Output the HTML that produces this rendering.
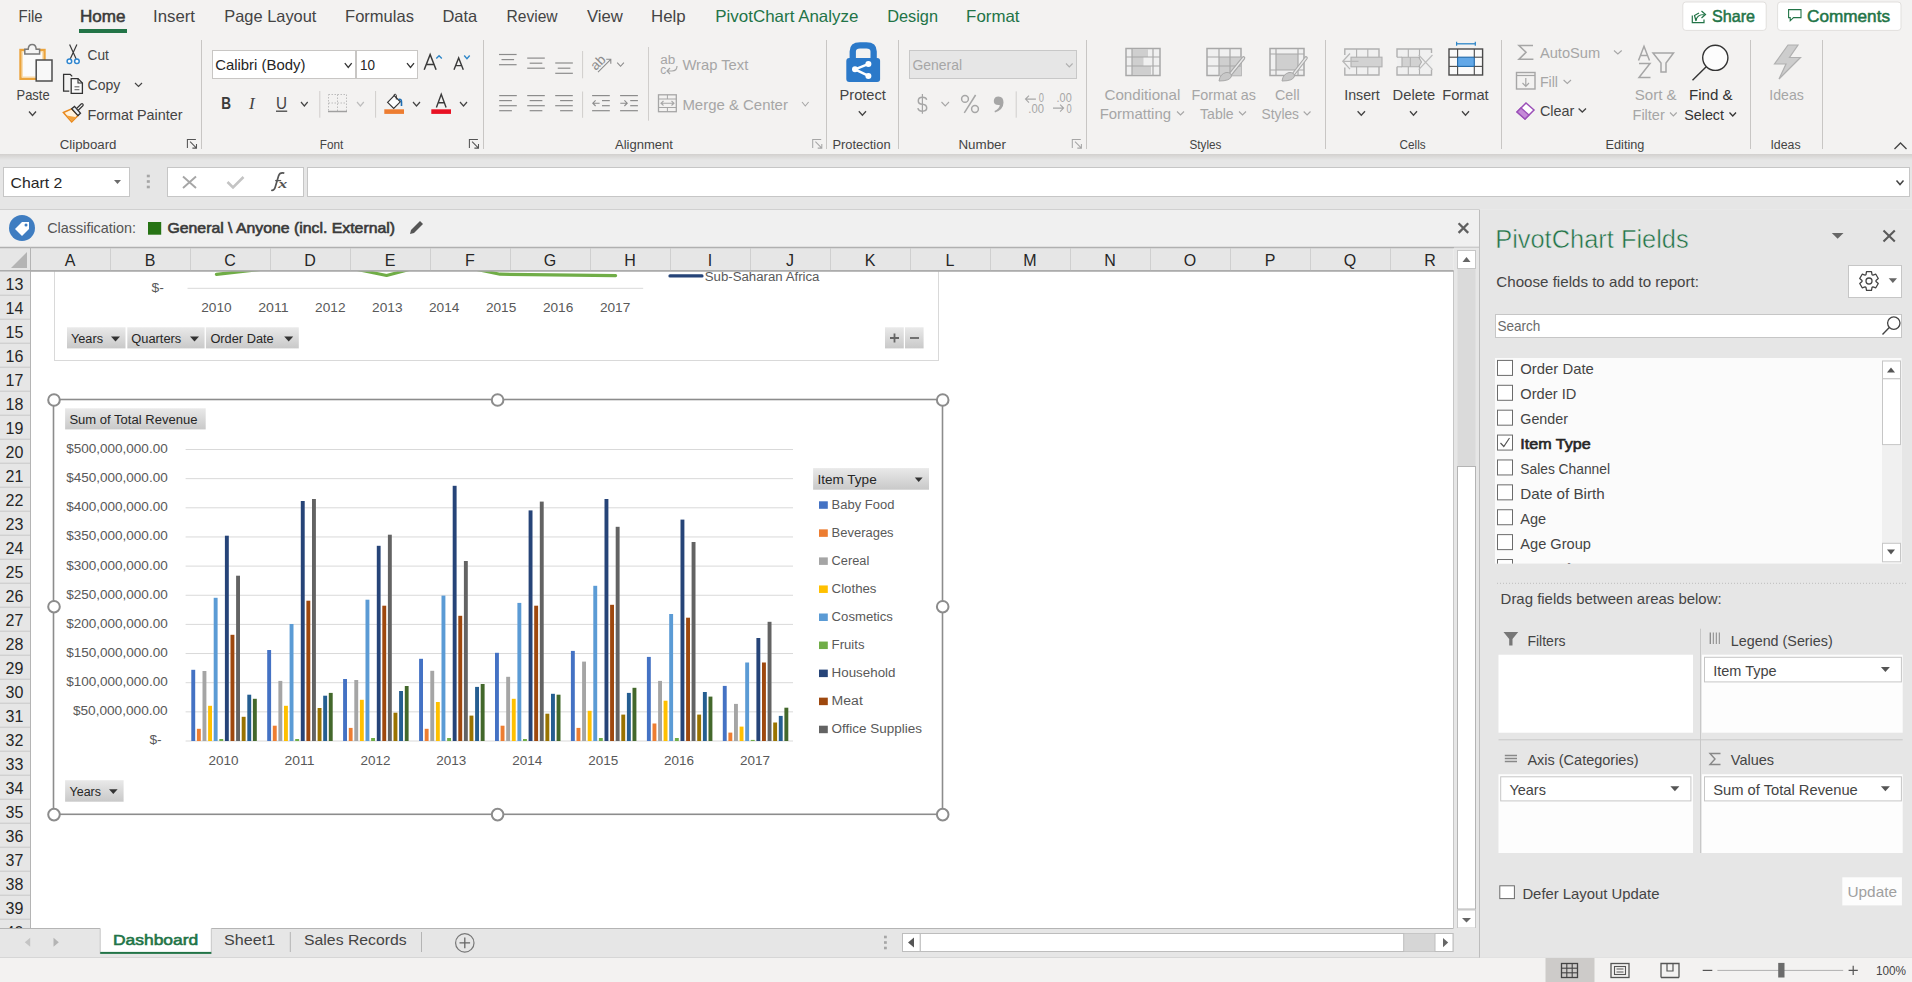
<!DOCTYPE html>
<html><head><meta charset="utf-8"><title>Excel - PivotChart</title>
<style>
html,body{margin:0;padding:0;background:#f3f2f1;}
body{width:1912px;height:982px;overflow:hidden;position:relative;font-family:"Liberation Sans",sans-serif;}
svg{position:absolute;left:0;top:0;display:block;font-family:"Liberation Sans",sans-serif;}
</style></head><body>
<svg width="1912" height="982" viewBox="0 0 1912 982">
<rect x="0" y="0" width="1912.00" height="154.00" fill="#f3f2f1"/>
<defs><linearGradient id="rshadow" x1="0" y1="0" x2="0" y2="1"><stop offset="0" stop-color="#d2d0ce"/><stop offset="1" stop-color="#e6e6e6"/></linearGradient><linearGradient id="btn" x1="0" y1="0" x2="0" y2="1"><stop offset="0" stop-color="#e9e9e9"/><stop offset="1" stop-color="#c9c9c9"/></linearGradient></defs>
<rect x="0" y="154" width="1912.00" height="6.00" fill="url(#rshadow)"/>
<text x="18.6" y="22.0" font-size="16.5" fill="#444" textLength="24.1" lengthAdjust="spacingAndGlyphs">File</text>
<text x="80.0" y="22.0" font-size="16.5" fill="#3a3a3a" textLength="45.5" lengthAdjust="spacingAndGlyphs" stroke="#3a3a3a" stroke-width="0.55">Home</text>
<text x="153.0" y="22.0" font-size="16.5" fill="#444" textLength="42.0" lengthAdjust="spacingAndGlyphs">Insert</text>
<text x="224.3" y="22.0" font-size="16.5" fill="#444" textLength="92.1" lengthAdjust="spacingAndGlyphs">Page Layout</text>
<text x="345.1" y="22.0" font-size="16.5" fill="#444" textLength="68.8" lengthAdjust="spacingAndGlyphs">Formulas</text>
<text x="442.4" y="22.0" font-size="16.5" fill="#444" textLength="34.8" lengthAdjust="spacingAndGlyphs">Data</text>
<text x="506.5" y="22.0" font-size="16.5" fill="#444" textLength="51.1" lengthAdjust="spacingAndGlyphs">Review</text>
<text x="587.0" y="22.0" font-size="16.5" fill="#444" textLength="35.9" lengthAdjust="spacingAndGlyphs">View</text>
<text x="651.0" y="22.0" font-size="16.5" fill="#444" textLength="34.6" lengthAdjust="spacingAndGlyphs">Help</text>
<text x="715.3" y="22.0" font-size="16.5" fill="#227447" textLength="143.1" lengthAdjust="spacingAndGlyphs">PivotChart Analyze</text>
<text x="887.2" y="22.0" font-size="16.5" fill="#227447" textLength="50.8" lengthAdjust="spacingAndGlyphs">Design</text>
<text x="966.1" y="22.0" font-size="16.5" fill="#227447" textLength="53.4" lengthAdjust="spacingAndGlyphs">Format</text>
<rect x="79" y="29" width="48.00" height="4.00" fill="#227447"/>
<rect x="1682.8" y="2" width="83.40" height="28.40" fill="#ffffff" stroke="#e1dfdd" stroke-width="1" rx="3"/>
<rect x="1777.6" y="2" width="123.40" height="28.40" fill="#ffffff" stroke="#e1dfdd" stroke-width="1" rx="3"/>
<path d="M1692.3 15.5 L1692.3 22.7 L1704 22.7 L1704 19.5" fill="none" stroke="#227447" stroke-width="1.2"/>
<path d="M1696 21 Q1696.5 14.5 1704.5 14.5 M1701.5 11 L1705.5 14.5 L1701.5 18 M1696 21 L1694.5 15.5 L1699 13" fill="none" stroke="#227447" stroke-width="1.2"/>
<text x="1712.0" y="21.6" font-size="16.5" fill="#227447" textLength="43.0" lengthAdjust="spacingAndGlyphs" stroke="#227447" stroke-width="0.5">Share</text>
<path d="M1788.6 9.6 L1801 9.6 L1801 17.6 L1793.5 17.6 L1790.2 20.8 L1790.2 17.6 L1788.6 17.6 Z" fill="none" stroke="#227447" stroke-width="1.1"/>
<text x="1807.0" y="21.6" font-size="16.5" fill="#227447" textLength="83.0" lengthAdjust="spacingAndGlyphs" stroke="#227447" stroke-width="0.5">Comments</text>
<line x1="201.5" y1="40" x2="201.5" y2="149" stroke="#c8c6c4" stroke-width="1"/>
<line x1="483.5" y1="40" x2="483.5" y2="149" stroke="#c8c6c4" stroke-width="1"/>
<line x1="826.5" y1="40" x2="826.5" y2="149" stroke="#c8c6c4" stroke-width="1"/>
<line x1="898.5" y1="40" x2="898.5" y2="149" stroke="#c8c6c4" stroke-width="1"/>
<line x1="1086.5" y1="40" x2="1086.5" y2="149" stroke="#c8c6c4" stroke-width="1"/>
<line x1="1325.5" y1="40" x2="1325.5" y2="149" stroke="#c8c6c4" stroke-width="1"/>
<line x1="1501.5" y1="40" x2="1501.5" y2="149" stroke="#c8c6c4" stroke-width="1"/>
<line x1="1750.5" y1="40" x2="1750.5" y2="149" stroke="#c8c6c4" stroke-width="1"/>
<line x1="1822.5" y1="40" x2="1822.5" y2="149" stroke="#c8c6c4" stroke-width="1"/>
<text x="59.8" y="148.5" font-size="12.5" fill="#444" textLength="56.7" lengthAdjust="spacingAndGlyphs">Clipboard</text>
<text x="319.8" y="148.5" font-size="12.5" fill="#444" textLength="23.5" lengthAdjust="spacingAndGlyphs">Font</text>
<text x="615.0" y="148.5" font-size="12.5" fill="#444" textLength="58.0" lengthAdjust="spacingAndGlyphs">Alignment</text>
<text x="832.4" y="148.5" font-size="12.5" fill="#444" textLength="58.2" lengthAdjust="spacingAndGlyphs">Protection</text>
<text x="958.4" y="148.5" font-size="12.5" fill="#444" textLength="47.6" lengthAdjust="spacingAndGlyphs">Number</text>
<text x="1189.5" y="148.5" font-size="12.5" fill="#444" textLength="31.9" lengthAdjust="spacingAndGlyphs">Styles</text>
<text x="1399.6" y="148.5" font-size="12.5" fill="#444" textLength="26.1" lengthAdjust="spacingAndGlyphs">Cells</text>
<text x="1605.6" y="148.5" font-size="12.5" fill="#444" textLength="38.8" lengthAdjust="spacingAndGlyphs">Editing</text>
<text x="1770.4" y="148.5" font-size="12.5" fill="#444" textLength="30.2" lengthAdjust="spacingAndGlyphs">Ideas</text>
<path d="M187.4 147.9 L187.4 139.4 L195.9 139.4 M190.1 141.7 L196.5 148.1 M196.5 144 L196.5 148.1 L192.4 148.1" fill="none" stroke="#555" stroke-width="1.05"/>
<path d="M469.4 147.9 L469.4 139.4 L477.9 139.4 M472.1 141.7 L478.5 148.1 M478.5 144 L478.5 148.1 L474.4 148.1" fill="none" stroke="#555" stroke-width="1.05"/>
<path d="M812.6999999999999 147.9 L812.6999999999999 139.4 L821.1999999999999 139.4 M815.4 141.7 L821.8 148.1 M821.8 144 L821.8 148.1 L817.6999999999999 148.1" fill="none" stroke="#a6a6a6" stroke-width="1.05"/>
<path d="M1072.3000000000002 147.9 L1072.3000000000002 139.4 L1080.8000000000002 139.4 M1075.0 141.7 L1081.4 148.1 M1081.4 144 L1081.4 148.1 L1077.3000000000002 148.1" fill="none" stroke="#a6a6a6" stroke-width="1.05"/>
<rect x="20.5" y="50" width="24.00" height="28.80" fill="#fbfbfb" stroke="#eba43c" stroke-width="2.4"/>
<rect x="22.3" y="51.8" width="20.40" height="25.20" fill="none" stroke="#f8d9a4" stroke-width="1"/>
<path d="M24.8 54 L24.8 49.2 L28.2 49.2 Q28.5 44.6 32.2 44.6 Q35.9 44.6 36.2 49.2 L39.6 49.2 L39.6 54 Z" fill="#f5f5f5" stroke="#7a7a7a" stroke-width="1.5"/>
<rect x="36.2" y="60" width="15.80" height="21.00" fill="#f8f8f8" stroke="#4d4d4d" stroke-width="1.5"/>
<text x="16.5" y="100.0" font-size="14.5" fill="#444" textLength="33.1" lengthAdjust="spacingAndGlyphs">Paste</text>
<path d="M29 111.5 L32.5 115.5 L36 111.5" fill="none" stroke="#444" stroke-width="1.3"/>
<path d="M69.6 44.4 L76.2 59 M76.9 44.4 L70.2 59" fill="none" stroke="#3a3a3a" stroke-width="1.2"/>
<circle cx="69.4" cy="61.3" r="2.3" fill="#ffffff" stroke="#2f86d0" stroke-width="1.5"/>
<circle cx="76.9" cy="61.3" r="2.3" fill="#ffffff" stroke="#2f86d0" stroke-width="1.5"/>
<text x="87.5" y="59.8" font-size="14.5" fill="#444" textLength="21.3" lengthAdjust="spacingAndGlyphs">Cut</text>
<path d="M69.3 91.1 L63.6 91.1 L63.6 74.4 L70.2 74.4 L72.2 76.4" fill="none" stroke="#333" stroke-width="1.3"/>
<path d="M71.2 78.6 L78 78.6 L82.4 83 L82.4 93.3 L71.2 93.3 Z" fill="#fafafa" stroke="#333" stroke-width="1.3"/>
<path d="M78 78.6 L78 83 L82.4 83" fill="none" stroke="#333" stroke-width="1.1"/>
<line x1="74.5" y1="86.8" x2="79.4" y2="86.8" stroke="#666" stroke-width="1.1"/>
<line x1="74.5" y1="89.7" x2="79.4" y2="89.7" stroke="#666" stroke-width="1.1"/>
<text x="87.5" y="89.7" font-size="14.5" fill="#444" textLength="32.8" lengthAdjust="spacingAndGlyphs">Copy</text>
<path d="M135 83 L138.5 86.5 L142 83" fill="none" stroke="#444" stroke-width="1.2"/>
<path d="M63.4 112.5 L71.7 108.8 L78 115.6 L71.7 121.9 Z" fill="#fff3df" stroke="#e8891e" stroke-width="1.5"/>
<path d="M66.6 115.6 L76.6 117.2 L71.7 121.3 Z" fill="#f2a23c"/>
<line x1="77.2" y1="109.6" x2="82" y2="104.9" stroke="#333" stroke-width="3.6" stroke-linecap="round"/>
<line x1="77.2" y1="109.6" x2="82" y2="104.9" stroke="#f5f5f5" stroke-width="1.3" stroke-linecap="round"/>
<path d="M71.7 108.8 L74.5 106.4 L80.5 113.3 L78 115.6 Z" fill="#e8eef5" stroke="#333" stroke-width="1.3"/>
<text x="87.5" y="119.6" font-size="14.5" fill="#444" textLength="95.1" lengthAdjust="spacingAndGlyphs">Format Painter</text>
<rect x="212.5" y="50.5" width="143.00" height="28.00" fill="#ffffff" stroke="#c8c6c4" stroke-width="1"/>
<rect x="356.5" y="50.5" width="61.00" height="28.00" fill="#ffffff" stroke="#c8c6c4" stroke-width="1"/>
<text x="215.2" y="70.2" font-size="14.5" fill="#262626" textLength="90.2" lengthAdjust="spacingAndGlyphs">Calibri (Body)</text>
<path d="M344.8 63.2 L348.25 67.4 L351.7 63.2" fill="none" stroke="#333" stroke-width="1.3"/>
<text x="360.0" y="70.2" font-size="14.5" fill="#262626" textLength="15.0" lengthAdjust="spacingAndGlyphs">10</text>
<path d="M407 63.2 L410.5 67.4 L414 63.2" fill="none" stroke="#333" stroke-width="1.3"/>
<path d="M424.2 69.8 L430.15 54.6 L436.1 69.8 M426.3 64.5 L434 64.5" fill="none" stroke="#3a3a3a" stroke-width="1.5"/>
<path d="M436.3 58.6 L439.05 55.7 L441.8 58.6" fill="none" stroke="#2e86c8" stroke-width="1.4"/>
<path d="M454 69.8 L458.65 58 L463.3 69.8 M455.7 65.6 L461.6 65.6" fill="none" stroke="#3a3a3a" stroke-width="1.4"/>
<path d="M464.2 55.5 L466.95 58.6 L469.7 55.5" fill="none" stroke="#2e86c8" stroke-width="1.4"/>
<text x="221.2" y="108.6" font-size="16.5" fill="#3a3a3a" font-weight="bold" textLength="9.8" lengthAdjust="spacingAndGlyphs">B</text>
<text x="249" y="108.6" font-size="17" fill="#444" font-family="Liberation Serif" font-style="italic">I</text>
<text x="276.0" y="108.6" font-size="16" fill="#444" textLength="11.0" lengthAdjust="spacingAndGlyphs">U</text>
<line x1="276" y1="111.2" x2="287.2" y2="111.2" stroke="#444" stroke-width="1.3"/>
<path d="M301 102 L304.35 106 L307.7 102" fill="none" stroke="#444" stroke-width="1.2"/>
<line x1="319.8" y1="91" x2="319.8" y2="117.7" stroke="#d0cecc" stroke-width="1"/>
<rect x="328.5" y="94.5" width="18.00" height="17.00" fill="none" stroke="#bdbdbd" stroke-width="1" stroke-dasharray="1.5 1.5"/>
<line x1="337.5" y1="94.5" x2="337.5" y2="111.5" stroke="#bdbdbd" stroke-width="1" stroke-dasharray="1.5 1.5"/>
<line x1="328.5" y1="103" x2="346.5" y2="103" stroke="#bdbdbd" stroke-width="1" stroke-dasharray="1.5 1.5"/>
<line x1="328" y1="111.5" x2="347" y2="111.5" stroke="#a0a0a0" stroke-width="1.5"/>
<path d="M357 102 L360.4 106 L363.8 102" fill="none" stroke="#bdbdbd" stroke-width="1.2"/>
<line x1="375.6" y1="91" x2="375.6" y2="117.7" stroke="#d0cecc" stroke-width="1"/>
<path d="M387.6 102.3 L394.2 95.7 L400.3 101.8 L393.7 108.4 Z" fill="#fdfdfd" stroke="#333" stroke-width="1.2"/>
<path d="M394.2 96 L394.2 94.5 Q395.6 93.4 396.3 95.2 L396.3 99.5" fill="none" stroke="#333" stroke-width="1"/>
<path d="M398.6 99.5 Q401.5 98.5 401.5 102 L401.5 106" fill="none" stroke="#1f6fb5" stroke-width="1.6"/>
<rect x="384.3" y="109.3" width="19.70" height="4.60" fill="#ed7d31"/>
<path d="M413 102 L416.5 106 L420 102" fill="none" stroke="#444" stroke-width="1.2"/>
<path d="M436.4 107.6 L441.25 94.3 L446.1 107.6 M438.2 102.8 L444.3 102.8" fill="none" stroke="#3a3a3a" stroke-width="1.4"/>
<rect x="431.3" y="109.3" width="19.70" height="4.60" fill="#e81123"/>
<path d="M460 102 L463.5 106 L467 102" fill="none" stroke="#444" stroke-width="1.2"/>
<line x1="498.99999999999994" y1="54.5" x2="516.5999999999999" y2="54.5" stroke="#8c8c8c" stroke-width="1.2"/>
<line x1="501.49999999999994" y1="59.6" x2="514.0999999999999" y2="59.6" stroke="#8c8c8c" stroke-width="1.2"/>
<line x1="498.99999999999994" y1="64.7" x2="516.5999999999999" y2="64.7" stroke="#8c8c8c" stroke-width="1.2"/>
<line x1="527.2" y1="58.1" x2="544.8" y2="58.1" stroke="#8c8c8c" stroke-width="1.2"/>
<line x1="529.7" y1="63.2" x2="542.3" y2="63.2" stroke="#8c8c8c" stroke-width="1.2"/>
<line x1="527.2" y1="68.2" x2="544.8" y2="68.2" stroke="#8c8c8c" stroke-width="1.2"/>
<line x1="555.25" y1="63" x2="572.8499999999999" y2="63" stroke="#8c8c8c" stroke-width="1.2"/>
<line x1="557.75" y1="68.2" x2="570.3499999999999" y2="68.2" stroke="#8c8c8c" stroke-width="1.2"/>
<line x1="555.25" y1="73.3" x2="572.8499999999999" y2="73.3" stroke="#8c8c8c" stroke-width="1.2"/>
<line x1="582.6" y1="51" x2="582.6" y2="78.3" stroke="#d0cecc" stroke-width="1"/>
<text x="589.5" y="67" font-size="13.5" fill="#8c8c8c" transform="rotate(-45 597.5 61.3)" style="-webkit-font-smoothing:antialiased">ab</text>
<path d="M598 72.2 L610.8 59.4 M606.2 59.2 L610.8 59.2 L610.8 63.8" fill="none" stroke="#8c8c8c" stroke-width="1.1"/>
<path d="M617.2 62.6 L620.55 66.3 L623.9 62.6" fill="none" stroke="#8c8c8c" stroke-width="1.1"/>
<line x1="648.5" y1="47" x2="648.5" y2="120.7" stroke="#d0cecc" stroke-width="1"/>
<text x="660.3" y="63.8" font-size="12" fill="#a6a6a6" textLength="15" lengthAdjust="spacingAndGlyphs">ab</text>
<text x="660.3" y="73.6" font-size="12" fill="#a6a6a6">c</text>
<path d="M677 66 Q677 71 672 71 L667 71 M670 68 L667 71 L670 74" fill="none" stroke="#a6a6a6" stroke-width="1.2"/>
<text x="682.4" y="69.8" font-size="14.5" fill="#a6a6a6" textLength="65.9" lengthAdjust="spacingAndGlyphs">Wrap Text</text>
<line x1="499.2" y1="95.6" x2="516.8" y2="95.6" stroke="#8c8c8c" stroke-width="1.2"/>
<line x1="499.2" y1="100.6" x2="511.9" y2="100.6" stroke="#8c8c8c" stroke-width="1.2"/>
<line x1="499.2" y1="105.7" x2="516.8" y2="105.7" stroke="#8c8c8c" stroke-width="1.2"/>
<line x1="499.2" y1="110.7" x2="511.9" y2="110.7" stroke="#8c8c8c" stroke-width="1.2"/>
<line x1="527.2" y1="95.6" x2="544.8" y2="95.6" stroke="#8c8c8c" stroke-width="1.2"/>
<line x1="529.65" y1="100.6" x2="542.35" y2="100.6" stroke="#8c8c8c" stroke-width="1.2"/>
<line x1="527.2" y1="105.7" x2="544.8" y2="105.7" stroke="#8c8c8c" stroke-width="1.2"/>
<line x1="529.65" y1="110.7" x2="542.35" y2="110.7" stroke="#8c8c8c" stroke-width="1.2"/>
<line x1="555.1999999999999" y1="95.6" x2="572.8" y2="95.6" stroke="#8c8c8c" stroke-width="1.2"/>
<line x1="560.0999999999999" y1="100.6" x2="572.8" y2="100.6" stroke="#8c8c8c" stroke-width="1.2"/>
<line x1="555.1999999999999" y1="105.7" x2="572.8" y2="105.7" stroke="#8c8c8c" stroke-width="1.2"/>
<line x1="560.0999999999999" y1="110.7" x2="572.8" y2="110.7" stroke="#8c8c8c" stroke-width="1.2"/>
<line x1="582.6" y1="91.5" x2="582.6" y2="117.8" stroke="#d0cecc" stroke-width="1"/>
<line x1="592.0999999999999" y1="95.6" x2="609.8" y2="95.6" stroke="#8c8c8c" stroke-width="1.2"/>
<line x1="602.0" y1="100.6" x2="609.8" y2="100.6" stroke="#8c8c8c" stroke-width="1.2"/>
<line x1="602.0" y1="105.7" x2="609.8" y2="105.7" stroke="#8c8c8c" stroke-width="1.2"/>
<line x1="592.0999999999999" y1="110.7" x2="609.8" y2="110.7" stroke="#8c8c8c" stroke-width="1.2"/>
<path d="M599.6 103.2 L592.8 103.2 M595.6 100.4 L592.8 103.2 L595.6 106" fill="none" stroke="#8c8c8c" stroke-width="1.1"/>
<line x1="620.1" y1="95.6" x2="637.9" y2="95.6" stroke="#8c8c8c" stroke-width="1.2"/>
<line x1="630.1999999999999" y1="100.6" x2="637.9" y2="100.6" stroke="#8c8c8c" stroke-width="1.2"/>
<line x1="630.1999999999999" y1="105.7" x2="637.9" y2="105.7" stroke="#8c8c8c" stroke-width="1.2"/>
<line x1="620.1" y1="110.7" x2="637.9" y2="110.7" stroke="#8c8c8c" stroke-width="1.2"/>
<path d="M620.3 103.2 L627.2 103.2 M624.4 100.4 L627.2 103.2 L624.4 106" fill="none" stroke="#8c8c8c" stroke-width="1.1"/>
<rect x="658.5" y="94.8" width="17.80" height="16.90" fill="none" stroke="#a6a6a6" stroke-width="1.3"/>
<line x1="658.5" y1="99" x2="676.3" y2="99" stroke="#a6a6a6" stroke-width="1"/>
<line x1="658.5" y1="107.5" x2="676.3" y2="107.5" stroke="#a6a6a6" stroke-width="1"/>
<line x1="667.4" y1="94.8" x2="667.4" y2="99" stroke="#a6a6a6" stroke-width="1"/>
<line x1="667.4" y1="107.5" x2="667.4" y2="111.7" stroke="#a6a6a6" stroke-width="1"/>
<path d="M661 103.2 L674 103.2 M663.5 101 L661 103.2 L663.5 105.5 M671.5 101 L674 103.2 L671.5 105.5" fill="none" stroke="#a6a6a6" stroke-width="1.1"/>
<text x="682.4" y="110.0" font-size="14.5" fill="#a6a6a6" textLength="105.5" lengthAdjust="spacingAndGlyphs">Merge &amp; Center</text>
<path d="M802 102 L805.3 106 L808.6 102" fill="none" stroke="#a6a6a6" stroke-width="1.1"/>
<path d="M852.75 59 L852.75 51.5 Q852.75 45.35 860 45.35 L866.4 45.35 Q873.65 45.35 873.65 51.5 L873.65 59" fill="none" stroke="#2b79c9" stroke-width="6.3"/>
<rect x="846.3" y="58" width="33.80" height="23.90" fill="#2b79c9" rx="3"/>
<path d="M855 69.3 L868 64.2 M855 69.3 L868 75.6" fill="none" stroke="#fff" stroke-width="2.4"/>
<circle cx="855" cy="69.3" r="3" fill="#fff"/><circle cx="868.4" cy="64" r="3" fill="#fff"/><circle cx="868.4" cy="75.9" r="3" fill="#fff"/>
<text x="839.5" y="99.8" font-size="14.5" fill="#444" textLength="46.4" lengthAdjust="spacingAndGlyphs">Protect</text>
<path d="M858.8 111.3 L862.4 115.3 L866 111.3" fill="none" stroke="#444" stroke-width="1.3"/>
<rect x="909.5" y="50.5" width="167.00" height="28.00" fill="#e6e6e6" stroke="#c8c8c8" stroke-width="1"/>
<text x="912.5" y="70.0" font-size="14.5" fill="#a6a6a6" textLength="49.5" lengthAdjust="spacingAndGlyphs">General</text>
<path d="M1066 63.5 L1069.3 67 L1072.6 63.5" fill="none" stroke="#b0b0b0" stroke-width="1.1"/>
<line x1="922.4" y1="94" x2="922.4" y2="113.7" stroke="#a6a6a6" stroke-width="1.2"/>
<path d="M926.6 99.8 Q926.2 97.3 922.4 97.3 Q918.3 97.3 918.3 100.9 Q918.3 103.9 922.4 104.3 Q926.7 104.7 926.7 108.1 Q926.7 111.2 922.4 111.2 Q918.4 111.2 917.9 108.2" fill="none" stroke="#a6a6a6" stroke-width="1.5"/>
<path d="M941.5 102 L945.25 106 L949 102" fill="none" stroke="#a6a6a6" stroke-width="1.1"/>
<circle cx="965" cy="98.9" r="3.4" fill="none" stroke="#a6a6a6" stroke-width="1.5"/>
<circle cx="975" cy="109" r="3.4" fill="none" stroke="#a6a6a6" stroke-width="1.5"/>
<line x1="975.6" y1="95" x2="964.3" y2="112.8" stroke="#a6a6a6" stroke-width="1.5"/>
<path d="M998.5 96.5 Q1003.5 96.5 1003.5 102.5 Q1003.5 109.5 995 112.5 L994.5 111 Q999.5 108.5 999.8 105 Q993.5 105.5 993.8 100.8 Q994.2 96.5 998.5 96.5 Z" fill="#a6a6a6"/>
<line x1="1016.2" y1="91.4" x2="1016.2" y2="117.7" stroke="#d0cecc" stroke-width="1"/>
<text x="1038.7" y="102.4" font-size="12" fill="#a6a6a6" textLength="5.2" lengthAdjust="spacingAndGlyphs">0</text>
<text x="1028.3" y="112.8" font-size="12" fill="#a6a6a6" textLength="15.6" lengthAdjust="spacingAndGlyphs">.00</text>
<path d="M1035.9 99.1 L1025.5 99.1 M1029 95.6 L1025.5 99.1 L1029 102.6" fill="none" stroke="#a6a6a6" stroke-width="1.1"/>
<text x="1056.6" y="102.4" font-size="12" fill="#a6a6a6" textLength="15.1" lengthAdjust="spacingAndGlyphs">.00</text>
<text x="1066.5" y="112.8" font-size="12" fill="#a6a6a6" textLength="5.2" lengthAdjust="spacingAndGlyphs">0</text>
<path d="M1053 108.1 L1063.6 108.1 M1060.1 104.6 L1063.6 108.1 L1060.1 111.6" fill="none" stroke="#a6a6a6" stroke-width="1.1"/>
<rect x="1126" y="48.5" width="34.00" height="27.00" fill="#f0f0f0" stroke="#a8a8a8" stroke-width="1.5"/>
<rect x="1132" y="49" width="16.00" height="8.00" fill="#cfcfcf"/>
<rect x="1132" y="57" width="11.50" height="9.00" fill="#cfcfcf"/>
<rect x="1132" y="66" width="19.00" height="9.00" fill="#cfcfcf"/>
<line x1="1126" y1="57" x2="1160" y2="57" stroke="#a8a8a8" stroke-width="1.2"/>
<line x1="1126" y1="66" x2="1160" y2="66" stroke="#a8a8a8" stroke-width="1.2"/>
<line x1="1132" y1="48.5" x2="1132" y2="75.5" stroke="#a8a8a8" stroke-width="1.2"/>
<line x1="1153" y1="48.5" x2="1153" y2="75.5" stroke="#a8a8a8" stroke-width="1.2"/>
<text x="1104.5" y="99.6" font-size="14.5" fill="#a6a6a6" textLength="75.8" lengthAdjust="spacingAndGlyphs">Conditional</text>
<text x="1099.7" y="119.3" font-size="14.5" fill="#a6a6a6" textLength="71.3" lengthAdjust="spacingAndGlyphs">Formatting</text>
<path d="M1177 111.5 L1180.5 115 L1184 111.5" fill="none" stroke="#a6a6a6" stroke-width="1.1"/>
<rect x="1207" y="48.5" width="34.00" height="27.00" fill="#f0f0f0" stroke="#a8a8a8" stroke-width="1.5"/>
<rect x="1219" y="57" width="22.00" height="18.50" fill="#cfcfcf"/>
<line x1="1207" y1="57" x2="1241" y2="57" stroke="#a8a8a8" stroke-width="1.2"/>
<line x1="1207" y1="66" x2="1241" y2="66" stroke="#a8a8a8" stroke-width="1.2"/>
<line x1="1219" y1="48.5" x2="1219" y2="75.5" stroke="#a8a8a8" stroke-width="1.2"/>
<line x1="1230" y1="48.5" x2="1230" y2="75.5" stroke="#a8a8a8" stroke-width="1.2"/>
<line x1="1231" y1="73.5" x2="1243.5" y2="58" stroke="#a8a8a8" stroke-width="3.6" stroke-linecap="round"/>
<line x1="1231" y1="73.5" x2="1243.5" y2="58" stroke="#e8e8e8" stroke-width="1.4" stroke-linecap="round"/>
<path d="M1219 81 Q1220 74 1226 72.5 Q1231 72 1231.5 76 Q1230.5 81 1219 81 Z" fill="#c8c8c8" stroke="#a8a8a8" stroke-width="1"/>
<text x="1191.5" y="99.6" font-size="14.5" fill="#a6a6a6" textLength="64.5" lengthAdjust="spacingAndGlyphs">Format as</text>
<text x="1200.0" y="119.3" font-size="14.5" fill="#a6a6a6" textLength="33.7" lengthAdjust="spacingAndGlyphs">Table</text>
<path d="M1239 111.5 L1242.5 115 L1246 111.5" fill="none" stroke="#a6a6a6" stroke-width="1.1"/>
<rect x="1270" y="48.5" width="34.00" height="27.00" fill="#f0f0f0" stroke="#a8a8a8" stroke-width="1.5"/>
<rect x="1276" y="54" width="22.00" height="16.00" fill="#cfcfcf"/>
<line x1="1270" y1="54" x2="1304" y2="54" stroke="#a8a8a8" stroke-width="1.2"/>
<line x1="1270" y1="70" x2="1304" y2="70" stroke="#a8a8a8" stroke-width="1.2"/>
<line x1="1276" y1="48.5" x2="1276" y2="75.5" stroke="#a8a8a8" stroke-width="1.2"/>
<line x1="1298" y1="48.5" x2="1298" y2="75.5" stroke="#a8a8a8" stroke-width="1.2"/>
<line x1="1294" y1="73.5" x2="1306" y2="58" stroke="#a8a8a8" stroke-width="3.6" stroke-linecap="round"/>
<line x1="1294" y1="73.5" x2="1306" y2="58" stroke="#e8e8e8" stroke-width="1.4" stroke-linecap="round"/>
<path d="M1282 81 Q1283 74 1289 72.5 Q1294 72 1294.5 76 Q1293.5 81 1282 81 Z" fill="#c8c8c8" stroke="#a8a8a8" stroke-width="1"/>
<text x="1275.0" y="99.6" font-size="14.5" fill="#a6a6a6" textLength="24.6" lengthAdjust="spacingAndGlyphs">Cell</text>
<text x="1261.5" y="119.3" font-size="14.5" fill="#a6a6a6" textLength="37.5" lengthAdjust="spacingAndGlyphs">Styles</text>
<path d="M1303.7 111.5 L1307.1 115 L1310.5 111.5" fill="none" stroke="#a6a6a6" stroke-width="1.1"/>
<rect x="1344.8" y="49" width="34.20" height="26.00" fill="#f0f0f0"/>
<path d="M1344.8 55 L1344.8 49 L1379 49 L1379 57.2 M1379 66.8 L1379 75 L1344.8 75 L1344.8 67.5" fill="none" stroke="#b0b0b0" stroke-width="1.4"/>
<line x1="1356.6" y1="49" x2="1356.6" y2="75" stroke="#b0b0b0" stroke-width="1.1"/>
<line x1="1367.8" y1="49" x2="1367.8" y2="75" stroke="#b0b0b0" stroke-width="1.1"/>
<rect x="1351" y="57.2" width="31.00" height="9.60" fill="#d2d2d2" stroke="#b0b0b0" stroke-width="1.1"/>
<path d="M1358.5 61.3 L1343 61.3 M1350 53.5 L1342.8 61.3 L1350 69.1" fill="none" stroke="#b8b8b8" stroke-width="1.3"/>
<text x="1344.2" y="100.0" font-size="14.5" fill="#444" textLength="35.6" lengthAdjust="spacingAndGlyphs">Insert</text>
<path d="M1357.6 111.3 L1361.3 115.3 L1365 111.3" fill="none" stroke="#444" stroke-width="1.3"/>
<rect x="1397" y="49" width="34.50" height="26.00" fill="#f0f0f0"/>
<path d="M1397 57.2 L1397 49 L1431.5 49 L1431.5 53 M1431.5 69.5 L1431.5 75 L1397 75 L1397 66.8" fill="none" stroke="#b0b0b0" stroke-width="1.4"/>
<line x1="1408.3" y1="49" x2="1408.3" y2="57.2" stroke="#b0b0b0" stroke-width="1.1"/>
<line x1="1408.3" y1="66.8" x2="1408.3" y2="75" stroke="#b0b0b0" stroke-width="1.1"/>
<line x1="1419.5" y1="49" x2="1419.5" y2="75" stroke="#b0b0b0" stroke-width="1.1"/>
<line x1="1397" y1="57.2" x2="1402" y2="57.2" stroke="#b0b0b0" stroke-width="1.1"/>
<line x1="1397" y1="66.8" x2="1402" y2="66.8" stroke="#b0b0b0" stroke-width="1.1"/>
<path d="M1402 57.2 L1418.7 57.2 L1421.5 62 L1418.7 66.8 L1402 66.8 Z" fill="#d2d2d2" stroke="#b0b0b0" stroke-width="1.1"/>
<line x1="1410.3" y1="57.2" x2="1410.3" y2="66.8" stroke="#b0b0b0" stroke-width="1"/>
<path d="M1418.7 55 L1432.5 69.7 M1432.5 55 L1418.7 69.7" fill="none" stroke="#bdbdbd" stroke-width="1.2"/>
<text x="1392.6" y="100.0" font-size="14.5" fill="#444" textLength="42.6" lengthAdjust="spacingAndGlyphs">Delete</text>
<path d="M1410 111.3 L1413.5 115.3 L1417 111.3" fill="none" stroke="#444" stroke-width="1.3"/>
<rect x="1449" y="49" width="33.60" height="26.00" fill="#fafafa" stroke="#4a4a4a" stroke-width="1.4"/>
<rect x="1457.6" y="57.2" width="16.70" height="9.20" fill="#62a8e8" stroke="#2067a8" stroke-width="1.1"/>
<line x1="1449" y1="57.2" x2="1457.6" y2="57.2" stroke="#4a4a4a" stroke-width="1.1"/>
<line x1="1474.3" y1="57.2" x2="1482.6" y2="57.2" stroke="#4a4a4a" stroke-width="1.1"/>
<line x1="1449" y1="66.4" x2="1457.6" y2="66.4" stroke="#4a4a4a" stroke-width="1.1"/>
<line x1="1474.3" y1="66.4" x2="1482.6" y2="66.4" stroke="#4a4a4a" stroke-width="1.1"/>
<line x1="1457.6" y1="49" x2="1457.6" y2="57.2" stroke="#4a4a4a" stroke-width="1.1"/>
<line x1="1474.3" y1="49" x2="1474.3" y2="57.2" stroke="#4a4a4a" stroke-width="1.1"/>
<line x1="1457.6" y1="66.4" x2="1457.6" y2="75" stroke="#4a4a4a" stroke-width="1.1"/>
<line x1="1474.3" y1="66.4" x2="1474.3" y2="75" stroke="#4a4a4a" stroke-width="1.1"/>
<line x1="1456.3" y1="43.8" x2="1475.6" y2="43.8" stroke="#2e86c8" stroke-width="1.3"/>
<line x1="1456.6" y1="41.8" x2="1456.6" y2="45.8" stroke="#2e86c8" stroke-width="1.2"/>
<line x1="1475.3" y1="41.8" x2="1475.3" y2="45.8" stroke="#2e86c8" stroke-width="1.2"/>
<text x="1442.2" y="100.0" font-size="14.5" fill="#444" textLength="46.5" lengthAdjust="spacingAndGlyphs">Format</text>
<path d="M1462 111.3 L1465.5 115.3 L1469 111.3" fill="none" stroke="#444" stroke-width="1.3"/>
<path d="M1533 45.5 L1519 45.5 L1526 52.3 L1519 59.3 L1533.4 59.3" fill="none" stroke="#a6a6a6" stroke-width="1.6"/>
<text x="1539.9" y="57.6" font-size="14.5" fill="#a6a6a6" textLength="60.3" lengthAdjust="spacingAndGlyphs">AutoSum</text>
<path d="M1614 50.5 L1617.85 54 L1621.7 50.5" fill="none" stroke="#a6a6a6" stroke-width="1.1"/>
<rect x="1516.5" y="72.5" width="18.50" height="16.50" fill="none" stroke="#a6a6a6" stroke-width="1.4"/>
<line x1="1516.5" y1="75.5" x2="1535" y2="75.5" stroke="#a6a6a6" stroke-width="1.2"/>
<path d="M1525.8 78 L1525.8 86 M1522.5 83 L1525.8 86.3 L1529 83" fill="none" stroke="#a6a6a6" stroke-width="1.2"/>
<text x="1539.9" y="87.0" font-size="14.5" fill="#a6a6a6" textLength="18.1" lengthAdjust="spacingAndGlyphs">Fill</text>
<path d="M1563.6 80 L1567.3 83.5 L1571 80" fill="none" stroke="#a6a6a6" stroke-width="1.1"/>
<path d="M1517 112 L1526 103 L1534 110 L1525 119 Z" fill="#fff" stroke="#9b4fb8" stroke-width="1.5"/>
<path d="M1517 112 L1521 108 L1529 115 L1525 119 Z" fill="#c58ad8" stroke="#9b4fb8" stroke-width="1.3"/>
<text x="1539.9" y="115.8" font-size="14.5" fill="#444" textLength="34.4" lengthAdjust="spacingAndGlyphs">Clear</text>
<path d="M1578.6 108.5 L1582.3 112 L1586 108.5" fill="none" stroke="#444" stroke-width="1.3"/>
<path d="M1638.5 60.5 L1644 46.3 L1649.5 60.5 M1640.5 55.5 L1647.5 55.5" fill="none" stroke="#a6a6a6" stroke-width="1.5"/>
<path d="M1639 63.5 L1650 63.5 L1639 77.5 L1650.5 77.5" fill="none" stroke="#a6a6a6" stroke-width="1.5"/>
<path d="M1653 53 L1673.5 53 L1666 63 L1666 72 L1661 72 L1661 63 Z" fill="none" stroke="#a6a6a6" stroke-width="1.5"/>
<text x="1634.7" y="99.6" font-size="14.5" fill="#a6a6a6" textLength="42.0" lengthAdjust="spacingAndGlyphs">Sort &amp;</text>
<text x="1632.5" y="120.0" font-size="14.5" fill="#a6a6a6" textLength="32.3" lengthAdjust="spacingAndGlyphs">Filter</text>
<path d="M1670 112.5 L1673.35 116 L1676.7 112.5" fill="none" stroke="#a6a6a6" stroke-width="1.1"/>
<circle cx="1715.3" cy="57.8" r="12.6" fill="#fdfdfd" stroke="#333" stroke-width="1.4"/>
<line x1="1706.2" y1="66.8" x2="1692.5" y2="80.2" stroke="#333" stroke-width="1.4"/>
<text x="1689.0" y="99.6" font-size="14.5" fill="#333" textLength="43.7" lengthAdjust="spacingAndGlyphs">Find &amp;</text>
<text x="1684.2" y="120.0" font-size="14.5" fill="#333" textLength="39.8" lengthAdjust="spacingAndGlyphs">Select</text>
<path d="M1729.5 112.5 L1732.75 116 L1736 112.5" fill="none" stroke="#333" stroke-width="1.3"/>
<path d="M1788 45 L1774.5 64 L1786 64 L1779 79 L1800.5 57.5 L1789.5 57.5 L1798 45 Z" fill="#cdcdcd" stroke="#b0b0b0" stroke-width="1.2"/>
<text x="1769.3" y="99.6" font-size="14.5" fill="#a6a6a6" textLength="34.5" lengthAdjust="spacingAndGlyphs">Ideas</text>
<path d="M1894.5 149 L1900.5 143 L1906.5 149" fill="none" stroke="#444" stroke-width="1.3"/>
<rect x="0" y="160" width="1912.00" height="49.60" fill="#e6e6e6"/>
<rect x="3.5" y="167.5" width="126.00" height="29.00" fill="#ffffff" stroke="#c6c6c6" stroke-width="1"/>
<text x="10.6" y="187.6" font-size="14.6" fill="#262626" textLength="51.8" lengthAdjust="spacingAndGlyphs">Chart 2</text>
<path d="M114 180 L121 180 L117.5 184 Z" fill="#6b6b6b"/>
<rect x="146.8" y="174.7" width="3.00" height="2.60" fill="#a6a6a6"/>
<rect x="146.8" y="180.2" width="3.00" height="2.60" fill="#a6a6a6"/>
<rect x="146.8" y="185.7" width="3.00" height="2.60" fill="#a6a6a6"/>
<rect x="167.5" y="167.5" width="136.00" height="29.00" fill="#ffffff" stroke="#c6c6c6" stroke-width="1"/>
<path d="M183 176.5 L196 188 M196 176.5 L183 188" fill="none" stroke="#a6a6a6" stroke-width="1.9"/>
<path d="M227.5 182 L233 187.5 L243.5 177" fill="none" stroke="#c4c4c4" stroke-width="2.6"/>
<path d="M271.2 190.2 Q274.3 191 275.4 186.5 L278.6 175.8 Q279.8 172.2 284.3 173.2" fill="none" stroke="#555" stroke-width="1.7"/>
<line x1="275.2" y1="180.6" x2="281.2" y2="180.6" stroke="#555" stroke-width="1.3"/>
<text x="278.2" y="187.8" font-size="12" fill="#555" font-family="Liberation Serif" font-style="italic" font-weight="bold" textLength="9" lengthAdjust="spacingAndGlyphs">x</text>
<rect x="307.5" y="167.5" width="1602.00" height="29.00" fill="#ffffff" stroke="#c6c6c6" stroke-width="1"/>
<path d="M1896.5 180.5 L1900.0 184.5 L1903.5 180.5" fill="none" stroke="#444" stroke-width="1.5"/>
<rect x="0" y="209.6" width="1479.00" height="37.40" fill="#f0f0f0"/>
<line x1="0" y1="209.5" x2="1479" y2="209.5" stroke="#d0d0d0" stroke-width="1"/>
<circle cx="22" cy="228" r="13" fill="#3f7dc1"/>
<path d="M15 229 L22 222 L29 222 L29 229 L22 236 Z" fill="#fff"/>
<circle cx="26" cy="225" r="1.5" fill="#3f7dc1"/>
<text x="47.2" y="232.8" font-size="14.5" fill="#555" textLength="88.8" lengthAdjust="spacingAndGlyphs">Classification:</text>
<rect x="148" y="222" width="13.20" height="12.70" fill="#267314"/>
<text x="167.5" y="232.9" font-size="14.5" fill="#3a3a3a" textLength="227.5" lengthAdjust="spacingAndGlyphs" stroke="#3a3a3a" stroke-width="0.6">General \ Anyone (incl. External)</text>
<path d="M410 234 L411 230 L420 221 L423 224 L414 233 Z" fill="#555"/>
<path d="M1458.6 223.3 L1468.2 232.9 M1468.2 223.3 L1458.6 232.9" fill="none" stroke="#606060" stroke-width="2.3"/>
<rect x="31" y="271.5" width="1422.00" height="656.50" fill="#ffffff"/>
<line x1="1453.5" y1="271" x2="1453.5" y2="928" stroke="#c6c6c6" stroke-width="1"/>
<rect x="54.5" y="250" width="884.00" height="110.50" fill="none" stroke="#d9d9d9" stroke-width="1"/>
<line x1="187.5" y1="288.3" x2="643.2" y2="288.3" stroke="#d9d9d9" stroke-width="1"/>
<text x="151.4" y="291.5" font-size="12.5" fill="#595959" textLength="12.4" lengthAdjust="spacingAndGlyphs">$-</text>
<text x="201.2" y="312.2" font-size="12.5" fill="#595959" textLength="30.4" lengthAdjust="spacingAndGlyphs">2010</text>
<text x="258.2" y="312.2" font-size="12.5" fill="#595959" textLength="30.4" lengthAdjust="spacingAndGlyphs">2011</text>
<text x="315.1" y="312.2" font-size="12.5" fill="#595959" textLength="30.4" lengthAdjust="spacingAndGlyphs">2012</text>
<text x="372.1" y="312.2" font-size="12.5" fill="#595959" textLength="30.4" lengthAdjust="spacingAndGlyphs">2013</text>
<text x="429.0" y="312.2" font-size="12.5" fill="#595959" textLength="30.4" lengthAdjust="spacingAndGlyphs">2014</text>
<text x="485.9" y="312.2" font-size="12.5" fill="#595959" textLength="30.4" lengthAdjust="spacingAndGlyphs">2015</text>
<text x="542.9" y="312.2" font-size="12.5" fill="#595959" textLength="30.4" lengthAdjust="spacingAndGlyphs">2016</text>
<text x="599.9" y="312.2" font-size="12.5" fill="#595959" textLength="30.4" lengthAdjust="spacingAndGlyphs">2017</text>
<path d="M216.4 274.3 L273 268 L330 262 M350 268 L386.6 275.5 L430 264 M460 266 L500 274.2 L615.6 275.6" fill="none" stroke="#70ad47" stroke-width="3.2" stroke-linecap="round" stroke-linejoin="round"/>
<line x1="670" y1="275.9" x2="702" y2="275.9" stroke="#264478" stroke-width="3.2" stroke-linecap="round"/>
<text x="704.7" y="281.4" font-size="12.5" fill="#595959" textLength="114.8" lengthAdjust="spacingAndGlyphs">Sub-Saharan Africa</text>
<rect x="67" y="327.3" width="58.50" height="21.10" fill="url(#btn)"/>
<text x="71.0" y="342.9" font-size="12.5" fill="#262626" textLength="32.0" lengthAdjust="spacingAndGlyphs">Years</text>
<path d="M111 336.5 L120 336.5 L115.5 341.5 Z" fill="#333"/>
<rect x="127.3" y="327.3" width="77.30" height="21.10" fill="url(#btn)"/>
<text x="131.3" y="342.9" font-size="12.5" fill="#262626" textLength="50.0" lengthAdjust="spacingAndGlyphs">Quarters</text>
<path d="M190 336.5 L199 336.5 L194.5 341.5 Z" fill="#333"/>
<rect x="205.9" y="327.3" width="92.90" height="21.10" fill="url(#btn)"/>
<text x="210.4" y="342.9" font-size="12.5" fill="#262626" textLength="63.3" lengthAdjust="spacingAndGlyphs">Order Date</text>
<path d="M284.2 336.5 L293.2 336.5 L288.7 341.5 Z" fill="#333"/>
<rect x="885" y="327.3" width="18.80" height="21.10" fill="url(#btn)"/>
<rect x="905" y="327.3" width="18.60" height="21.10" fill="url(#btn)"/>
<path d="M890 338 L899 338 M894.5 333.5 L894.5 342.5" fill="none" stroke="#666" stroke-width="1.8"/>
<path d="M910 338 L919 338" fill="none" stroke="#666" stroke-width="1.8"/>
<rect x="0" y="247" width="1453.50" height="24.00" fill="#e6e6e6"/>
<line x1="0" y1="247.5" x2="1479" y2="247.5" stroke="#b0b0b0" stroke-width="1.3"/>
<line x1="0" y1="270.8" x2="1453.5" y2="270.8" stroke="#a8a8a8" stroke-width="1.3"/>
<path d="M11 268 L27 268 L27 252 Z" fill="#b4b4b4"/>
<line x1="110.5" y1="248" x2="110.5" y2="270.5" stroke="#cfcfcf" stroke-width="1"/>
<text x="70" y="265.8" font-size="16" fill="#262626" text-anchor="middle">A</text>
<line x1="190.5" y1="248" x2="190.5" y2="270.5" stroke="#cfcfcf" stroke-width="1"/>
<text x="150" y="265.8" font-size="16" fill="#262626" text-anchor="middle">B</text>
<line x1="270.5" y1="248" x2="270.5" y2="270.5" stroke="#cfcfcf" stroke-width="1"/>
<text x="230" y="265.8" font-size="16" fill="#262626" text-anchor="middle">C</text>
<line x1="350.5" y1="248" x2="350.5" y2="270.5" stroke="#cfcfcf" stroke-width="1"/>
<text x="310" y="265.8" font-size="16" fill="#262626" text-anchor="middle">D</text>
<line x1="430.5" y1="248" x2="430.5" y2="270.5" stroke="#cfcfcf" stroke-width="1"/>
<text x="390" y="265.8" font-size="16" fill="#262626" text-anchor="middle">E</text>
<line x1="510.5" y1="248" x2="510.5" y2="270.5" stroke="#cfcfcf" stroke-width="1"/>
<text x="470" y="265.8" font-size="16" fill="#262626" text-anchor="middle">F</text>
<line x1="590.5" y1="248" x2="590.5" y2="270.5" stroke="#cfcfcf" stroke-width="1"/>
<text x="550" y="265.8" font-size="16" fill="#262626" text-anchor="middle">G</text>
<line x1="670.5" y1="248" x2="670.5" y2="270.5" stroke="#cfcfcf" stroke-width="1"/>
<text x="630" y="265.8" font-size="16" fill="#262626" text-anchor="middle">H</text>
<line x1="750.5" y1="248" x2="750.5" y2="270.5" stroke="#cfcfcf" stroke-width="1"/>
<text x="710" y="265.8" font-size="16" fill="#262626" text-anchor="middle">I</text>
<line x1="830.5" y1="248" x2="830.5" y2="270.5" stroke="#cfcfcf" stroke-width="1"/>
<text x="790" y="265.8" font-size="16" fill="#262626" text-anchor="middle">J</text>
<line x1="910.5" y1="248" x2="910.5" y2="270.5" stroke="#cfcfcf" stroke-width="1"/>
<text x="870" y="265.8" font-size="16" fill="#262626" text-anchor="middle">K</text>
<line x1="990.5" y1="248" x2="990.5" y2="270.5" stroke="#cfcfcf" stroke-width="1"/>
<text x="950" y="265.8" font-size="16" fill="#262626" text-anchor="middle">L</text>
<line x1="1070.5" y1="248" x2="1070.5" y2="270.5" stroke="#cfcfcf" stroke-width="1"/>
<text x="1030" y="265.8" font-size="16" fill="#262626" text-anchor="middle">M</text>
<line x1="1150.5" y1="248" x2="1150.5" y2="270.5" stroke="#cfcfcf" stroke-width="1"/>
<text x="1110" y="265.8" font-size="16" fill="#262626" text-anchor="middle">N</text>
<line x1="1230.5" y1="248" x2="1230.5" y2="270.5" stroke="#cfcfcf" stroke-width="1"/>
<text x="1190" y="265.8" font-size="16" fill="#262626" text-anchor="middle">O</text>
<line x1="1310.5" y1="248" x2="1310.5" y2="270.5" stroke="#cfcfcf" stroke-width="1"/>
<text x="1270" y="265.8" font-size="16" fill="#262626" text-anchor="middle">P</text>
<line x1="1390.5" y1="248" x2="1390.5" y2="270.5" stroke="#cfcfcf" stroke-width="1"/>
<text x="1350" y="265.8" font-size="16" fill="#262626" text-anchor="middle">Q</text>
<line x1="1470.5" y1="248" x2="1470.5" y2="270.5" stroke="#cfcfcf" stroke-width="1"/>
<text x="1430" y="265.8" font-size="16" fill="#262626" text-anchor="middle">R</text>
<rect x="0" y="271" width="30.50" height="657.00" fill="#e6e6e6"/>
<line x1="0" y1="295.2" x2="30.5" y2="295.2" stroke="#c8c8c8" stroke-width="1"/>
<text x="14.5" y="289.7" font-size="16" fill="#262626" text-anchor="middle">13</text>
<line x1="0" y1="319.2" x2="30.5" y2="319.2" stroke="#c8c8c8" stroke-width="1"/>
<text x="14.5" y="313.7" font-size="16" fill="#262626" text-anchor="middle">14</text>
<line x1="0" y1="343.2" x2="30.5" y2="343.2" stroke="#c8c8c8" stroke-width="1"/>
<text x="14.5" y="337.7" font-size="16" fill="#262626" text-anchor="middle">15</text>
<line x1="0" y1="367.2" x2="30.5" y2="367.2" stroke="#c8c8c8" stroke-width="1"/>
<text x="14.5" y="361.7" font-size="16" fill="#262626" text-anchor="middle">16</text>
<line x1="0" y1="391.2" x2="30.5" y2="391.2" stroke="#c8c8c8" stroke-width="1"/>
<text x="14.5" y="385.7" font-size="16" fill="#262626" text-anchor="middle">17</text>
<line x1="0" y1="415.2" x2="30.5" y2="415.2" stroke="#c8c8c8" stroke-width="1"/>
<text x="14.5" y="409.7" font-size="16" fill="#262626" text-anchor="middle">18</text>
<line x1="0" y1="439.2" x2="30.5" y2="439.2" stroke="#c8c8c8" stroke-width="1"/>
<text x="14.5" y="433.7" font-size="16" fill="#262626" text-anchor="middle">19</text>
<line x1="0" y1="463.2" x2="30.5" y2="463.2" stroke="#c8c8c8" stroke-width="1"/>
<text x="14.5" y="457.7" font-size="16" fill="#262626" text-anchor="middle">20</text>
<line x1="0" y1="487.2" x2="30.5" y2="487.2" stroke="#c8c8c8" stroke-width="1"/>
<text x="14.5" y="481.7" font-size="16" fill="#262626" text-anchor="middle">21</text>
<line x1="0" y1="511.2" x2="30.5" y2="511.2" stroke="#c8c8c8" stroke-width="1"/>
<text x="14.5" y="505.7" font-size="16" fill="#262626" text-anchor="middle">22</text>
<line x1="0" y1="535.2" x2="30.5" y2="535.2" stroke="#c8c8c8" stroke-width="1"/>
<text x="14.5" y="529.7" font-size="16" fill="#262626" text-anchor="middle">23</text>
<line x1="0" y1="559.2" x2="30.5" y2="559.2" stroke="#c8c8c8" stroke-width="1"/>
<text x="14.5" y="553.7" font-size="16" fill="#262626" text-anchor="middle">24</text>
<line x1="0" y1="583.2" x2="30.5" y2="583.2" stroke="#c8c8c8" stroke-width="1"/>
<text x="14.5" y="577.7" font-size="16" fill="#262626" text-anchor="middle">25</text>
<line x1="0" y1="607.2" x2="30.5" y2="607.2" stroke="#c8c8c8" stroke-width="1"/>
<text x="14.5" y="601.7" font-size="16" fill="#262626" text-anchor="middle">26</text>
<line x1="0" y1="631.2" x2="30.5" y2="631.2" stroke="#c8c8c8" stroke-width="1"/>
<text x="14.5" y="625.7" font-size="16" fill="#262626" text-anchor="middle">27</text>
<line x1="0" y1="655.2" x2="30.5" y2="655.2" stroke="#c8c8c8" stroke-width="1"/>
<text x="14.5" y="649.7" font-size="16" fill="#262626" text-anchor="middle">28</text>
<line x1="0" y1="679.2" x2="30.5" y2="679.2" stroke="#c8c8c8" stroke-width="1"/>
<text x="14.5" y="673.7" font-size="16" fill="#262626" text-anchor="middle">29</text>
<line x1="0" y1="703.2" x2="30.5" y2="703.2" stroke="#c8c8c8" stroke-width="1"/>
<text x="14.5" y="697.7" font-size="16" fill="#262626" text-anchor="middle">30</text>
<line x1="0" y1="727.2" x2="30.5" y2="727.2" stroke="#c8c8c8" stroke-width="1"/>
<text x="14.5" y="721.7" font-size="16" fill="#262626" text-anchor="middle">31</text>
<line x1="0" y1="751.2" x2="30.5" y2="751.2" stroke="#c8c8c8" stroke-width="1"/>
<text x="14.5" y="745.7" font-size="16" fill="#262626" text-anchor="middle">32</text>
<line x1="0" y1="775.2" x2="30.5" y2="775.2" stroke="#c8c8c8" stroke-width="1"/>
<text x="14.5" y="769.7" font-size="16" fill="#262626" text-anchor="middle">33</text>
<line x1="0" y1="799.2" x2="30.5" y2="799.2" stroke="#c8c8c8" stroke-width="1"/>
<text x="14.5" y="793.7" font-size="16" fill="#262626" text-anchor="middle">34</text>
<line x1="0" y1="823.2" x2="30.5" y2="823.2" stroke="#c8c8c8" stroke-width="1"/>
<text x="14.5" y="817.7" font-size="16" fill="#262626" text-anchor="middle">35</text>
<line x1="0" y1="847.2" x2="30.5" y2="847.2" stroke="#c8c8c8" stroke-width="1"/>
<text x="14.5" y="841.7" font-size="16" fill="#262626" text-anchor="middle">36</text>
<line x1="0" y1="871.2" x2="30.5" y2="871.2" stroke="#c8c8c8" stroke-width="1"/>
<text x="14.5" y="865.7" font-size="16" fill="#262626" text-anchor="middle">37</text>
<line x1="0" y1="895.2" x2="30.5" y2="895.2" stroke="#c8c8c8" stroke-width="1"/>
<text x="14.5" y="889.7" font-size="16" fill="#262626" text-anchor="middle">38</text>
<line x1="0" y1="919.2" x2="30.5" y2="919.2" stroke="#c8c8c8" stroke-width="1"/>
<text x="14.5" y="913.7" font-size="16" fill="#262626" text-anchor="middle">39</text>
<line x1="0" y1="943.2" x2="30.5" y2="943.2" stroke="#c8c8c8" stroke-width="1"/>
<text x="14.5" y="937.7" font-size="16" fill="#262626" text-anchor="middle">40</text>
<line x1="30.5" y1="247" x2="30.5" y2="928" stroke="#b4b4b4" stroke-width="1"/>
<line x1="0" y1="270.8" x2="1453.5" y2="270.8" stroke="#a8a8a8" stroke-width="1.3"/>
<rect x="53.5" y="399.5" width="889.00" height="414.80" fill="#ffffff" stroke="#8c8c8c" stroke-width="1.6"/>
<rect x="65.1" y="408.3" width="140.60" height="21.10" fill="url(#btn)"/>
<text x="69.4" y="424.0" font-size="12.5" fill="#262626" textLength="128.1" lengthAdjust="spacingAndGlyphs">Sum of Total Revenue</text>
<line x1="185.6" y1="741.0" x2="793" y2="741.0" stroke="#d9d9d9" stroke-width="1"/>
<line x1="185.6" y1="711.85" x2="793" y2="711.85" stroke="#d9d9d9" stroke-width="1"/>
<line x1="185.6" y1="682.7" x2="793" y2="682.7" stroke="#d9d9d9" stroke-width="1"/>
<line x1="185.6" y1="653.55" x2="793" y2="653.55" stroke="#d9d9d9" stroke-width="1"/>
<line x1="185.6" y1="624.4" x2="793" y2="624.4" stroke="#d9d9d9" stroke-width="1"/>
<line x1="185.6" y1="595.25" x2="793" y2="595.25" stroke="#d9d9d9" stroke-width="1"/>
<line x1="185.6" y1="566.1" x2="793" y2="566.1" stroke="#d9d9d9" stroke-width="1"/>
<line x1="185.6" y1="536.95" x2="793" y2="536.95" stroke="#d9d9d9" stroke-width="1"/>
<line x1="185.6" y1="507.8" x2="793" y2="507.8" stroke="#d9d9d9" stroke-width="1"/>
<line x1="185.6" y1="478.65000000000003" x2="793" y2="478.65000000000003" stroke="#d9d9d9" stroke-width="1"/>
<line x1="185.6" y1="449.5" x2="793" y2="449.5" stroke="#d9d9d9" stroke-width="1"/>
<text x="149.4" y="744.4" font-size="12.5" fill="#595959" textLength="12.2" lengthAdjust="spacingAndGlyphs">$-</text>
<text x="72.9" y="715.2" font-size="12.5" fill="#595959" textLength="94.8" lengthAdjust="spacingAndGlyphs">$50,000,000.00</text>
<text x="66.2" y="686.1" font-size="12.5" fill="#595959" textLength="101.5" lengthAdjust="spacingAndGlyphs">$100,000,000.00</text>
<text x="66.2" y="656.9" font-size="12.5" fill="#595959" textLength="101.5" lengthAdjust="spacingAndGlyphs">$150,000,000.00</text>
<text x="66.2" y="627.8" font-size="12.5" fill="#595959" textLength="101.5" lengthAdjust="spacingAndGlyphs">$200,000,000.00</text>
<text x="66.2" y="598.6" font-size="12.5" fill="#595959" textLength="101.5" lengthAdjust="spacingAndGlyphs">$250,000,000.00</text>
<text x="66.2" y="569.5" font-size="12.5" fill="#595959" textLength="101.5" lengthAdjust="spacingAndGlyphs">$300,000,000.00</text>
<text x="66.2" y="540.4" font-size="12.5" fill="#595959" textLength="101.5" lengthAdjust="spacingAndGlyphs">$350,000,000.00</text>
<text x="66.2" y="511.2" font-size="12.5" fill="#595959" textLength="101.5" lengthAdjust="spacingAndGlyphs">$400,000,000.00</text>
<text x="66.2" y="482.1" font-size="12.5" fill="#595959" textLength="101.5" lengthAdjust="spacingAndGlyphs">$450,000,000.00</text>
<text x="66.2" y="452.9" font-size="12.5" fill="#595959" textLength="101.5" lengthAdjust="spacingAndGlyphs">$500,000,000.00</text>
<rect x="191.3" y="669.8" width="3.90" height="71.20" fill="#4472c4"/>
<rect x="196.9" y="728.8" width="3.90" height="12.20" fill="#ed7d31"/>
<rect x="202.5" y="671" width="3.90" height="70.00" fill="#a5a5a5"/>
<rect x="208.1" y="705.8" width="3.90" height="35.20" fill="#ffc000"/>
<rect x="213.7" y="597.8" width="3.90" height="143.20" fill="#5b9bd5"/>
<rect x="219.3" y="739" width="3.90" height="2.00" fill="#70ad47"/>
<rect x="224.9" y="535.7" width="3.90" height="205.30" fill="#264478"/>
<rect x="230.5" y="634.8" width="3.90" height="106.20" fill="#9e480e"/>
<rect x="236.1" y="575.7" width="3.90" height="165.30" fill="#636363"/>
<rect x="241.7" y="716.8" width="3.90" height="24.20" fill="#997300"/>
<rect x="247.3" y="694.7" width="3.90" height="46.30" fill="#255e91"/>
<rect x="252.9" y="698.8" width="3.90" height="42.20" fill="#43682b"/>
<text x="208.6" y="764.7" font-size="12.5" fill="#595959" textLength="30.0" lengthAdjust="spacingAndGlyphs">2010</text>
<rect x="267.2" y="650" width="3.90" height="91.00" fill="#4472c4"/>
<rect x="272.8" y="725.7" width="3.90" height="15.30" fill="#ed7d31"/>
<rect x="278.4" y="680.9" width="3.90" height="60.10" fill="#a5a5a5"/>
<rect x="284.0" y="705.8" width="3.90" height="35.20" fill="#ffc000"/>
<rect x="289.6" y="624" width="3.90" height="117.00" fill="#5b9bd5"/>
<rect x="295.2" y="739" width="3.90" height="2.00" fill="#70ad47"/>
<rect x="300.8" y="501" width="3.90" height="240.00" fill="#264478"/>
<rect x="306.4" y="600.7" width="3.90" height="140.30" fill="#9e480e"/>
<rect x="312.0" y="499" width="3.90" height="242.00" fill="#636363"/>
<rect x="317.6" y="708" width="3.90" height="33.00" fill="#997300"/>
<rect x="323.2" y="695.7" width="3.90" height="45.30" fill="#255e91"/>
<rect x="328.8" y="692.9" width="3.90" height="48.10" fill="#43682b"/>
<text x="284.5" y="764.7" font-size="12.5" fill="#595959" textLength="30.0" lengthAdjust="spacingAndGlyphs">2011</text>
<rect x="343.1" y="679" width="3.90" height="62.00" fill="#4472c4"/>
<rect x="348.8" y="727.9" width="3.80" height="13.10" fill="#ed7d31"/>
<rect x="354.3" y="680" width="3.90" height="61.00" fill="#a5a5a5"/>
<rect x="359.9" y="699.8" width="3.90" height="41.20" fill="#ffc000"/>
<rect x="365.5" y="599.7" width="3.90" height="141.30" fill="#5b9bd5"/>
<rect x="371.1" y="738" width="3.90" height="3.00" fill="#70ad47"/>
<rect x="376.8" y="545.8" width="3.80" height="195.20" fill="#264478"/>
<rect x="382.3" y="605.7" width="3.90" height="135.30" fill="#9e480e"/>
<rect x="387.9" y="534.7" width="3.90" height="206.30" fill="#636363"/>
<rect x="393.5" y="712.7" width="3.90" height="28.30" fill="#997300"/>
<rect x="399.1" y="691" width="3.90" height="50.00" fill="#255e91"/>
<rect x="404.8" y="686" width="3.80" height="55.00" fill="#43682b"/>
<text x="360.4" y="764.7" font-size="12.5" fill="#595959" textLength="30.0" lengthAdjust="spacingAndGlyphs">2012</text>
<rect x="419.1" y="658.8" width="3.90" height="82.20" fill="#4472c4"/>
<rect x="424.7" y="728.8" width="3.90" height="12.20" fill="#ed7d31"/>
<rect x="430.3" y="670.8" width="3.90" height="70.20" fill="#a5a5a5"/>
<rect x="435.9" y="702" width="3.90" height="39.00" fill="#ffc000"/>
<rect x="441.5" y="595.6" width="3.90" height="145.40" fill="#5b9bd5"/>
<rect x="447.1" y="738" width="3.90" height="3.00" fill="#70ad47"/>
<rect x="452.7" y="485.8" width="3.90" height="255.20" fill="#264478"/>
<rect x="458.3" y="615.8" width="3.90" height="125.20" fill="#9e480e"/>
<rect x="463.9" y="561" width="3.90" height="180.00" fill="#636363"/>
<rect x="469.5" y="715.6" width="3.90" height="25.40" fill="#997300"/>
<rect x="475.1" y="686.9" width="3.90" height="54.10" fill="#255e91"/>
<rect x="480.7" y="684" width="3.90" height="57.00" fill="#43682b"/>
<text x="436.3" y="764.7" font-size="12.5" fill="#595959" textLength="30.0" lengthAdjust="spacingAndGlyphs">2013</text>
<rect x="495.0" y="652.8" width="3.90" height="88.20" fill="#4472c4"/>
<rect x="500.6" y="725.7" width="3.90" height="15.30" fill="#ed7d31"/>
<rect x="506.2" y="676.8" width="3.90" height="64.20" fill="#a5a5a5"/>
<rect x="511.8" y="698.8" width="3.90" height="42.20" fill="#ffc000"/>
<rect x="517.4" y="602.9" width="3.90" height="138.10" fill="#5b9bd5"/>
<rect x="523.0" y="739" width="3.90" height="2.00" fill="#70ad47"/>
<rect x="528.6" y="510.4" width="3.90" height="230.60" fill="#264478"/>
<rect x="534.2" y="605.7" width="3.90" height="135.30" fill="#9e480e"/>
<rect x="539.8" y="501.6" width="3.90" height="239.40" fill="#636363"/>
<rect x="545.4" y="713.7" width="3.90" height="27.30" fill="#997300"/>
<rect x="551.0" y="693.8" width="3.90" height="47.20" fill="#255e91"/>
<rect x="556.6" y="694.7" width="3.90" height="46.30" fill="#43682b"/>
<text x="512.3" y="764.7" font-size="12.5" fill="#595959" textLength="30.0" lengthAdjust="spacingAndGlyphs">2014</text>
<rect x="570.9" y="650.9" width="3.90" height="90.10" fill="#4472c4"/>
<rect x="576.5" y="727.9" width="3.90" height="13.10" fill="#ed7d31"/>
<rect x="582.1" y="661.6" width="3.90" height="79.40" fill="#a5a5a5"/>
<rect x="587.7" y="710.8" width="3.90" height="30.20" fill="#ffc000"/>
<rect x="593.3" y="585.8" width="3.90" height="155.20" fill="#5b9bd5"/>
<rect x="598.9" y="738" width="3.90" height="3.00" fill="#70ad47"/>
<rect x="604.5" y="499" width="3.90" height="242.00" fill="#264478"/>
<rect x="610.1" y="604.8" width="3.90" height="136.20" fill="#9e480e"/>
<rect x="615.7" y="526.8" width="3.90" height="214.20" fill="#636363"/>
<rect x="621.3" y="714.6" width="3.90" height="26.40" fill="#997300"/>
<rect x="626.9" y="692.9" width="3.90" height="48.10" fill="#255e91"/>
<rect x="632.5" y="687.8" width="3.90" height="53.20" fill="#43682b"/>
<text x="588.2" y="764.7" font-size="12.5" fill="#595959" textLength="30.0" lengthAdjust="spacingAndGlyphs">2015</text>
<rect x="646.9" y="656.9" width="3.90" height="84.10" fill="#4472c4"/>
<rect x="652.5" y="723.5" width="3.90" height="17.50" fill="#ed7d31"/>
<rect x="658.1" y="680.9" width="3.90" height="60.10" fill="#a5a5a5"/>
<rect x="663.6" y="700.7" width="3.90" height="40.30" fill="#ffc000"/>
<rect x="669.2" y="614" width="3.90" height="127.00" fill="#5b9bd5"/>
<rect x="674.9" y="738" width="3.90" height="3.00" fill="#70ad47"/>
<rect x="680.5" y="519.6" width="3.90" height="221.40" fill="#264478"/>
<rect x="686.1" y="617.7" width="3.90" height="123.30" fill="#9e480e"/>
<rect x="691.6" y="542" width="3.90" height="199.00" fill="#636363"/>
<rect x="697.2" y="714.6" width="3.90" height="26.40" fill="#997300"/>
<rect x="702.9" y="692" width="3.90" height="49.00" fill="#255e91"/>
<rect x="708.5" y="696.6" width="3.90" height="44.40" fill="#43682b"/>
<text x="664.1" y="764.7" font-size="12.5" fill="#595959" textLength="30.0" lengthAdjust="spacingAndGlyphs">2016</text>
<rect x="722.8" y="685.9" width="3.90" height="55.10" fill="#4472c4"/>
<rect x="728.4" y="732.6" width="3.90" height="8.40" fill="#ed7d31"/>
<rect x="734.0" y="703.9" width="3.90" height="37.10" fill="#a5a5a5"/>
<rect x="739.6" y="726.6" width="3.90" height="14.40" fill="#ffc000"/>
<rect x="745.2" y="662.5" width="3.90" height="78.50" fill="#5b9bd5"/>
<rect x="750.8" y="739.9" width="3.90" height="1.10" fill="#70ad47"/>
<rect x="756.4" y="638" width="3.90" height="103.00" fill="#264478"/>
<rect x="762.0" y="662.5" width="3.90" height="78.50" fill="#9e480e"/>
<rect x="767.6" y="621.8" width="3.90" height="119.20" fill="#636363"/>
<rect x="773.2" y="722.5" width="3.90" height="18.50" fill="#997300"/>
<rect x="778.8" y="715.9" width="3.90" height="25.10" fill="#255e91"/>
<rect x="784.4" y="707.7" width="3.90" height="33.30" fill="#43682b"/>
<text x="740.0" y="764.7" font-size="12.5" fill="#595959" textLength="30.0" lengthAdjust="spacingAndGlyphs">2017</text>
<rect x="813.1" y="468.1" width="115.90" height="21.60" fill="url(#btn)"/>
<text x="817.4" y="484.0" font-size="12.5" fill="#262626" textLength="59.3" lengthAdjust="spacingAndGlyphs">Item Type</text>
<path d="M914.8 477.5 L922.6 477.5 L918.7 482 Z" fill="#333"/>
<rect x="819" y="501.3" width="8.80" height="7.50" fill="#4472c4"/>
<text x="831.6" y="508.8" font-size="12.5" fill="#595959" textLength="62.8" lengthAdjust="spacingAndGlyphs">Baby Food</text>
<rect x="819" y="529.35" width="8.80" height="7.50" fill="#ed7d31"/>
<text x="831.6" y="536.9" font-size="12.5" fill="#595959" textLength="62.0" lengthAdjust="spacingAndGlyphs">Beverages</text>
<rect x="819" y="557.4" width="8.80" height="7.50" fill="#a5a5a5"/>
<text x="831.6" y="564.9" font-size="12.5" fill="#595959" textLength="37.7" lengthAdjust="spacingAndGlyphs">Cereal</text>
<rect x="819" y="585.45" width="8.80" height="7.50" fill="#ffc000"/>
<text x="831.6" y="593.0" font-size="12.5" fill="#595959" textLength="44.9" lengthAdjust="spacingAndGlyphs">Clothes</text>
<rect x="819" y="613.5" width="8.80" height="7.50" fill="#5b9bd5"/>
<text x="831.6" y="621.0" font-size="12.5" fill="#595959" textLength="61.3" lengthAdjust="spacingAndGlyphs">Cosmetics</text>
<rect x="819" y="641.55" width="8.80" height="7.50" fill="#70ad47"/>
<text x="831.6" y="649.0" font-size="12.5" fill="#595959" textLength="32.9" lengthAdjust="spacingAndGlyphs">Fruits</text>
<rect x="819" y="669.6" width="8.80" height="7.50" fill="#264478"/>
<text x="831.6" y="677.1" font-size="12.5" fill="#595959" textLength="63.9" lengthAdjust="spacingAndGlyphs">Household</text>
<rect x="819" y="697.65" width="8.80" height="7.50" fill="#9e480e"/>
<text x="831.6" y="705.1" font-size="12.5" fill="#595959" textLength="31.2" lengthAdjust="spacingAndGlyphs">Meat</text>
<rect x="819" y="725.7" width="8.80" height="7.50" fill="#636363"/>
<text x="831.6" y="733.2" font-size="12.5" fill="#595959" textLength="90.4" lengthAdjust="spacingAndGlyphs">Office Supplies</text>
<rect x="65.1" y="780.2" width="58.50" height="21.50" fill="url(#btn)"/>
<text x="69.5" y="796.0" font-size="12.5" fill="#262626" textLength="31.5" lengthAdjust="spacingAndGlyphs">Years</text>
<path d="M109 789.2 L117.6 789.2 L113.3 794 Z" fill="#333"/>
<circle cx="54" cy="400" r="5.8" fill="#ffffff" stroke="#8c8c8c" stroke-width="2"/>
<circle cx="497.6" cy="400" r="5.8" fill="#ffffff" stroke="#8c8c8c" stroke-width="2"/>
<circle cx="942.7" cy="400" r="5.8" fill="#ffffff" stroke="#8c8c8c" stroke-width="2"/>
<circle cx="54" cy="606.7" r="5.8" fill="#ffffff" stroke="#8c8c8c" stroke-width="2"/>
<circle cx="942.7" cy="606.7" r="5.8" fill="#ffffff" stroke="#8c8c8c" stroke-width="2"/>
<circle cx="54" cy="814.6" r="5.8" fill="#ffffff" stroke="#8c8c8c" stroke-width="2"/>
<circle cx="497.6" cy="814.6" r="5.8" fill="#ffffff" stroke="#8c8c8c" stroke-width="2"/>
<circle cx="942.7" cy="814.6" r="5.8" fill="#ffffff" stroke="#8c8c8c" stroke-width="2"/>
<rect x="1454" y="247.5" width="25.00" height="680.50" fill="#e6e6e6"/>
<rect x="1457.5" y="268.5" width="18.00" height="640.50" fill="#dadada"/>
<rect x="1457.5" y="466.5" width="18.00" height="442.50" fill="#ffffff" stroke="#b4b4b4" stroke-width="1"/>
<rect x="1457.5" y="250.5" width="18.00" height="18.00" fill="#ffffff" stroke="#c6c6c6" stroke-width="1"/>
<path d="M1462.5 262 L1470.5 262 L1466.5 257 Z" fill="#666"/>
<rect x="1457.5" y="910" width="18.00" height="18.00" fill="#ffffff" stroke="#c6c6c6" stroke-width="1"/>
<path d="M1462 918 L1471 918 L1466.5 922.6 Z" fill="#666"/>
<rect x="0" y="928" width="1479.00" height="29.70" fill="#e6e6e6"/>
<line x1="0" y1="928.5" x2="1453.5" y2="928.5" stroke="#b4b4b4" stroke-width="1"/>
<path d="M30.2 937.7 L24.8 942.2 L30.2 946.8 Z" fill="#c4c4c4"/>
<path d="M53.5 937.7 L58.8 942.2 L53.5 946.8 Z" fill="#b4b4b4"/>
<rect x="100.2" y="928" width="111.10" height="26.00" fill="#ffffff"/>
<line x1="100.2" y1="928.5" x2="100.2" y2="954" stroke="#c6c6c6" stroke-width="1"/>
<line x1="211.3" y1="928.5" x2="211.3" y2="954" stroke="#c6c6c6" stroke-width="1"/>
<rect x="100.2" y="951.9" width="111.10" height="2.00" fill="#227447"/>
<text x="113.0" y="944.6" font-size="15.5" fill="#227447" textLength="85.2" lengthAdjust="spacingAndGlyphs" stroke="#227447" stroke-width="0.6">Dashboard</text>
<text x="224.1" y="945.0" font-size="14.5" fill="#444" textLength="51.0" lengthAdjust="spacingAndGlyphs">Sheet1</text>
<line x1="290.3" y1="932" x2="290.3" y2="952" stroke="#b4b4b4" stroke-width="1"/>
<text x="304.1" y="945.0" font-size="14.5" fill="#444" textLength="102.5" lengthAdjust="spacingAndGlyphs">Sales Records</text>
<line x1="421.5" y1="932" x2="421.5" y2="952" stroke="#b4b4b4" stroke-width="1"/>
<circle cx="464.8" cy="942.9" r="9.2" fill="none" stroke="#777" stroke-width="1.2"/>
<path d="M459.5 942.9 L470.1 942.9 M464.8 937.6 L464.8 948.2" fill="none" stroke="#666" stroke-width="1.3"/>
<rect x="884" y="935.7" width="2.80" height="2.60" fill="#a6a6a6"/>
<rect x="884" y="941.2" width="2.80" height="2.60" fill="#a6a6a6"/>
<rect x="884" y="946.7" width="2.80" height="2.60" fill="#a6a6a6"/>
<rect x="902.5" y="933.5" width="550.50" height="18.00" fill="#d6d6d6" stroke="#c6c6c6" stroke-width="1"/>
<rect x="902.5" y="933.5" width="17.80" height="18.00" fill="#ffffff" stroke="#bdbdbd" stroke-width="1"/>
<path d="M0 0 L0 0 L0.0 0 Z" fill="#444"/>
<path d="M914 937.5 L908 942.5 L914 947.5 Z" fill="#555"/>
<rect x="920.3" y="933.5" width="483.40" height="18.00" fill="#ffffff" stroke="#bdbdbd" stroke-width="1"/>
<rect x="1435" y="933.5" width="18.00" height="18.00" fill="#ffffff" stroke="#bdbdbd" stroke-width="1"/>
<path d="M1443 938 L1448.2 942.6 L1443 947.2 Z" fill="#666"/>
<rect x="0" y="957.7" width="1912.00" height="24.30" fill="#f3f2f1"/>
<line x1="0" y1="957.5" x2="1912" y2="957.5" stroke="#d6d6d6" stroke-width="1"/>
<rect x="1545.5" y="958" width="49.00" height="24.00" fill="#cdcbc9"/>
<rect x="1561.5" y="963.5" width="16.00" height="14.00" fill="none" stroke="#444" stroke-width="1.3"/>
<line x1="1566.8" y1="963.5" x2="1566.8" y2="977.5" stroke="#444" stroke-width="1.1"/>
<line x1="1572.2" y1="963.5" x2="1572.2" y2="977.5" stroke="#444" stroke-width="1.1"/>
<line x1="1561.5" y1="968.2" x2="1577.5" y2="968.2" stroke="#444" stroke-width="1.1"/>
<line x1="1561.5" y1="972.8" x2="1577.5" y2="972.8" stroke="#444" stroke-width="1.1"/>
<rect x="1611" y="963.5" width="18.00" height="14.00" fill="none" stroke="#555" stroke-width="1.3"/>
<rect x="1614.5" y="966.5" width="11.00" height="8.00" fill="none" stroke="#555" stroke-width="1.1"/>
<line x1="1616.5" y1="969" x2="1623.5" y2="969" stroke="#555" stroke-width="1"/>
<line x1="1616.5" y1="972" x2="1623.5" y2="972" stroke="#555" stroke-width="1"/>
<path d="M1661 977.5 L1661 963.5 L1679 963.5 L1679 977.5 M1661 977.5 L1679 977.5" fill="none" stroke="#555" stroke-width="1.3"/>
<path d="M1667 963.5 L1667 971 L1673 971 L1673 963.5" fill="none" stroke="#555" stroke-width="1.2"/>
<line x1="1702.7" y1="970.4" x2="1712.3" y2="970.4" stroke="#555" stroke-width="1.2"/>
<line x1="1717.4" y1="970.4" x2="1843.2" y2="970.4" stroke="#b0b0b0" stroke-width="1"/>
<rect x="1778.2" y="962.9" width="6.30" height="14.60" fill="#6b6b6b"/>
<path d="M1848.6 970.4 L1857.8 970.4 M1853.2 965.8 L1853.2 975" fill="none" stroke="#555" stroke-width="1.2"/>
<text x="1875.9" y="975.0" font-size="12" fill="#444" textLength="30.1" lengthAdjust="spacingAndGlyphs">100%</text>
<rect x="1479" y="209.6" width="433.00" height="748.10" fill="#e6e6e6"/>
<line x1="1479.5" y1="209.6" x2="1479.5" y2="957.7" stroke="#bdbdbd" stroke-width="1"/>
<text x="1495.2" y="248.4" font-size="25" fill="#217346" textLength="193.5" lengthAdjust="spacingAndGlyphs" stroke="#e6e6e6" stroke-width="0.5">PivotChart Fields</text>
<path d="M1831.8 233 L1843.5 233 L1837.65 238.7 Z" fill="#666"/>
<path d="M1883.5 230.6 L1894.8 241.6 M1894.8 230.6 L1883.5 241.6" fill="none" stroke="#5a5a5a" stroke-width="2.1"/>
<text x="1496.3" y="287.0" font-size="15" fill="#444" textLength="202.7" lengthAdjust="spacingAndGlyphs">Choose fields to add to report:</text>
<rect x="1848.5" y="265.5" width="53.00" height="32.00" fill="#ffffff" stroke="#c6c6c6" stroke-width="1"/>
<g transform="translate(1869 281)"><path d="M-3.04 -6.30 L-2.47 -9.28 L2.47 -9.28 L3.04 -6.30 L3.94 -5.79 L6.80 -6.78 L9.27 -2.50 L6.98 -0.51 L6.98 0.51 L9.27 2.50 L6.80 6.78 L3.94 5.79 L3.04 6.30 L2.47 9.28 L-2.47 9.28 L-3.04 6.30 L-3.94 5.79 L-6.80 6.78 L-9.27 2.50 L-6.98 0.51 L-6.98 -0.51 L-9.27 -2.50 L-6.80 -6.78 L-3.94 -5.79 Z" fill="none" stroke="#444" stroke-width="1.3" stroke-linejoin="round"/><circle r="3" fill="none" stroke="#444" stroke-width="1.3"/></g>
<path d="M1888.7 278.3 L1897 278.3 L1892.85 283 Z" fill="#666"/>
<rect x="1495.5" y="314.5" width="406.00" height="23.00" fill="#ffffff" stroke="#c6c6c6" stroke-width="1"/>
<text x="1497.5" y="331.0" font-size="14.5" fill="#6b6b6b" textLength="42.9" lengthAdjust="spacingAndGlyphs">Search</text>
<circle cx="1893.8" cy="323.1" r="6.2" fill="none" stroke="#444" stroke-width="1.3"/>
<line x1="1889.3" y1="327.6" x2="1882.5" y2="334.4" stroke="#444" stroke-width="1.4"/>
<rect x="1495" y="358" width="406.50" height="205.80" fill="#fbfbfb"/>
<defs><clipPath id="flist"><rect x="1495" y="358" width="407" height="205.8"/></clipPath></defs><g clip-path="url(#flist)">
<rect x="1497.5" y="360.40000000000003" width="15.00" height="15.00" fill="#ffffff" stroke="#6b6b6b" stroke-width="1"/>
<text x="1520.3" y="374.4" font-size="14.5" fill="#444" textLength="73.5" lengthAdjust="spacingAndGlyphs">Order Date</text>
<rect x="1497.5" y="385.29" width="15.00" height="15.00" fill="#ffffff" stroke="#6b6b6b" stroke-width="1"/>
<text x="1520.3" y="399.3" font-size="14.5" fill="#444" textLength="56.1" lengthAdjust="spacingAndGlyphs">Order ID</text>
<rect x="1497.5" y="410.18000000000006" width="15.00" height="15.00" fill="#ffffff" stroke="#6b6b6b" stroke-width="1"/>
<text x="1520.3" y="424.2" font-size="14.5" fill="#444" textLength="47.7" lengthAdjust="spacingAndGlyphs">Gender</text>
<rect x="1497.5" y="435.07000000000005" width="15.00" height="15.00" fill="#ffffff" stroke="#6b6b6b" stroke-width="1"/>
<path d="M1500.5 442.97 L1503.8 446.47 L1509.5 437.97" fill="none" stroke="#555" stroke-width="1.2"/>
<text x="1520.3" y="449.1" font-size="14.5" fill="#262626" textLength="70.4" lengthAdjust="spacingAndGlyphs" stroke="#262626" stroke-width="0.6">Item Type</text>
<rect x="1497.5" y="459.96000000000004" width="15.00" height="15.00" fill="#ffffff" stroke="#6b6b6b" stroke-width="1"/>
<text x="1520.3" y="474.0" font-size="14.5" fill="#444" textLength="89.7" lengthAdjust="spacingAndGlyphs">Sales Channel</text>
<rect x="1497.5" y="484.85" width="15.00" height="15.00" fill="#ffffff" stroke="#6b6b6b" stroke-width="1"/>
<text x="1520.3" y="498.9" font-size="14.5" fill="#444" textLength="84.4" lengthAdjust="spacingAndGlyphs">Date of Birth</text>
<rect x="1497.5" y="509.74" width="15.00" height="15.00" fill="#ffffff" stroke="#6b6b6b" stroke-width="1"/>
<text x="1520.3" y="523.7" font-size="14.5" fill="#444" textLength="25.9" lengthAdjust="spacingAndGlyphs">Age</text>
<rect x="1497.5" y="534.63" width="15.00" height="15.00" fill="#ffffff" stroke="#6b6b6b" stroke-width="1"/>
<text x="1520.3" y="548.6" font-size="14.5" fill="#444" textLength="70.7" lengthAdjust="spacingAndGlyphs">Age Group</text>
<rect x="1497.5" y="559.5200000000001" width="15.00" height="15.00" fill="#ffffff" stroke="#6b6b6b" stroke-width="1"/>
<text x="1520.3" y="573.5" font-size="14.5" fill="#444" textLength="79.6" lengthAdjust="spacingAndGlyphs">Region</text>
</g>
<rect x="1495" y="563.8" width="406.50" height="6.20" fill="#e6e6e6"/>
<rect x="1882" y="360.6" width="19.00" height="201.20" fill="#f0f0f0"/>
<rect x="1882.5" y="361" width="18.00" height="17.80" fill="#ffffff" stroke="#c6c6c6" stroke-width="1"/>
<path d="M1887 372.5 L1895 372.5 L1891.0 367.5 Z" fill="#555"/>
<rect x="1882.5" y="378.8" width="18.00" height="65.80" fill="#ffffff" stroke="#c6c6c6" stroke-width="1"/>
<rect x="1882.5" y="543.3" width="18.00" height="18.50" fill="#ffffff" stroke="#c6c6c6" stroke-width="1"/>
<path d="M1887 549.5 L1895 549.5 L1891.0 554.5 Z" fill="#555"/>
<line x1="1497" y1="583.3" x2="1906" y2="583.3" stroke="#bdbdbd" stroke-width="1" stroke-dasharray="1 2"/>
<text x="1500.6" y="603.8" font-size="14.5" fill="#444" textLength="221.0" lengthAdjust="spacingAndGlyphs">Drag fields between areas below:</text>
<rect x="1498.5" y="654.7" width="194.50" height="78.00" fill="#ffffff"/>
<rect x="1701.9" y="654.7" width="200.80" height="78.00" fill="#fdfdfd"/>
<rect x="1498.5" y="774.2" width="194.50" height="78.80" fill="#fdfdfd"/>
<rect x="1701.9" y="774.2" width="200.80" height="78.80" fill="#fdfdfd"/>
<line x1="1700.5" y1="628.7" x2="1700.5" y2="853" stroke="#c8c8c8" stroke-width="1"/>
<line x1="1498.5" y1="739.8" x2="1902.7" y2="739.8" stroke="#c8c8c8" stroke-width="1"/>
<path d="M1503.5 632 L1518.2 632 L1512.5 639 L1512.5 645.5 L1509.2 645.5 L1509.2 639 Z" fill="#777"/>
<text x="1527.4" y="646.3" font-size="14.5" fill="#444" textLength="38.2" lengthAdjust="spacingAndGlyphs">Filters</text>
<line x1="1710.3" y1="632.5" x2="1710.3" y2="644" stroke="#888" stroke-width="1.3"/>
<line x1="1713.3" y1="632.5" x2="1713.3" y2="644" stroke="#888" stroke-width="1"/>
<line x1="1716.3" y1="632.5" x2="1716.3" y2="644" stroke="#888" stroke-width="1"/>
<line x1="1719.3" y1="632.5" x2="1719.3" y2="644" stroke="#888" stroke-width="1"/>
<text x="1730.8" y="646.3" font-size="14.5" fill="#444" textLength="101.9" lengthAdjust="spacingAndGlyphs">Legend (Series)</text>
<line x1="1504.8" y1="755.5" x2="1517" y2="755.5" stroke="#888" stroke-width="1.5"/>
<line x1="1504.8" y1="758.5" x2="1517" y2="758.5" stroke="#888" stroke-width="1.5"/>
<line x1="1504.8" y1="761.5" x2="1517" y2="761.5" stroke="#888" stroke-width="1.5"/>
<text x="1527.4" y="765.0" font-size="14.5" fill="#444" textLength="111.1" lengthAdjust="spacingAndGlyphs">Axis (Categories)</text>
<path d="M1720.5 753.5 L1710 753.5 L1715 759 L1710 764.5 L1720.5 764.5" fill="none" stroke="#888" stroke-width="1.4"/>
<text x="1730.8" y="765.0" font-size="14.5" fill="#444" textLength="43.2" lengthAdjust="spacingAndGlyphs">Values</text>
<rect x="1704.5" y="657.3" width="196.90" height="24.60" fill="#ffffff" stroke="#c6c6c6" stroke-width="1"/>
<text x="1713.2" y="675.6" font-size="14.5" fill="#444" textLength="63.4" lengthAdjust="spacingAndGlyphs">Item Type</text>
<path d="M1880.9 667.0999999999999 L1889.9 667.0999999999999 L1885.4 672.0999999999999 Z" fill="#555"/>
<rect x="1500.7" y="776.8" width="190.20" height="24.10" fill="#ffffff" stroke="#c6c6c6" stroke-width="1"/>
<text x="1509.4" y="794.8" font-size="14.5" fill="#444" textLength="36.5" lengthAdjust="spacingAndGlyphs">Years</text>
<path d="M1670.4 786.3499999999999 L1679.4 786.3499999999999 L1674.9 791.3499999999999 Z" fill="#555"/>
<rect x="1704.5" y="776.8" width="196.90" height="24.10" fill="#ffffff" stroke="#c6c6c6" stroke-width="1"/>
<text x="1713.2" y="794.8" font-size="14.5" fill="#444" textLength="144.6" lengthAdjust="spacingAndGlyphs">Sum of Total Revenue</text>
<path d="M1880.9 786.3499999999999 L1889.9 786.3499999999999 L1885.4 791.3499999999999 Z" fill="#555"/>
<rect x="1499.8" y="885.8" width="14.60" height="12.80" fill="#ffffff" stroke="#6b6b6b" stroke-width="1"/>
<text x="1522.4" y="899.0" font-size="14.5" fill="#444" textLength="137.1" lengthAdjust="spacingAndGlyphs">Defer Layout Update</text>
<rect x="1842.3" y="877.3" width="59.60" height="28.10" fill="#fdfdfd"/>
<text x="1847.5" y="897.0" font-size="14.5" fill="#a0a0a0" textLength="49.5" lengthAdjust="spacingAndGlyphs">Update</text>
</svg>
</body></html>
